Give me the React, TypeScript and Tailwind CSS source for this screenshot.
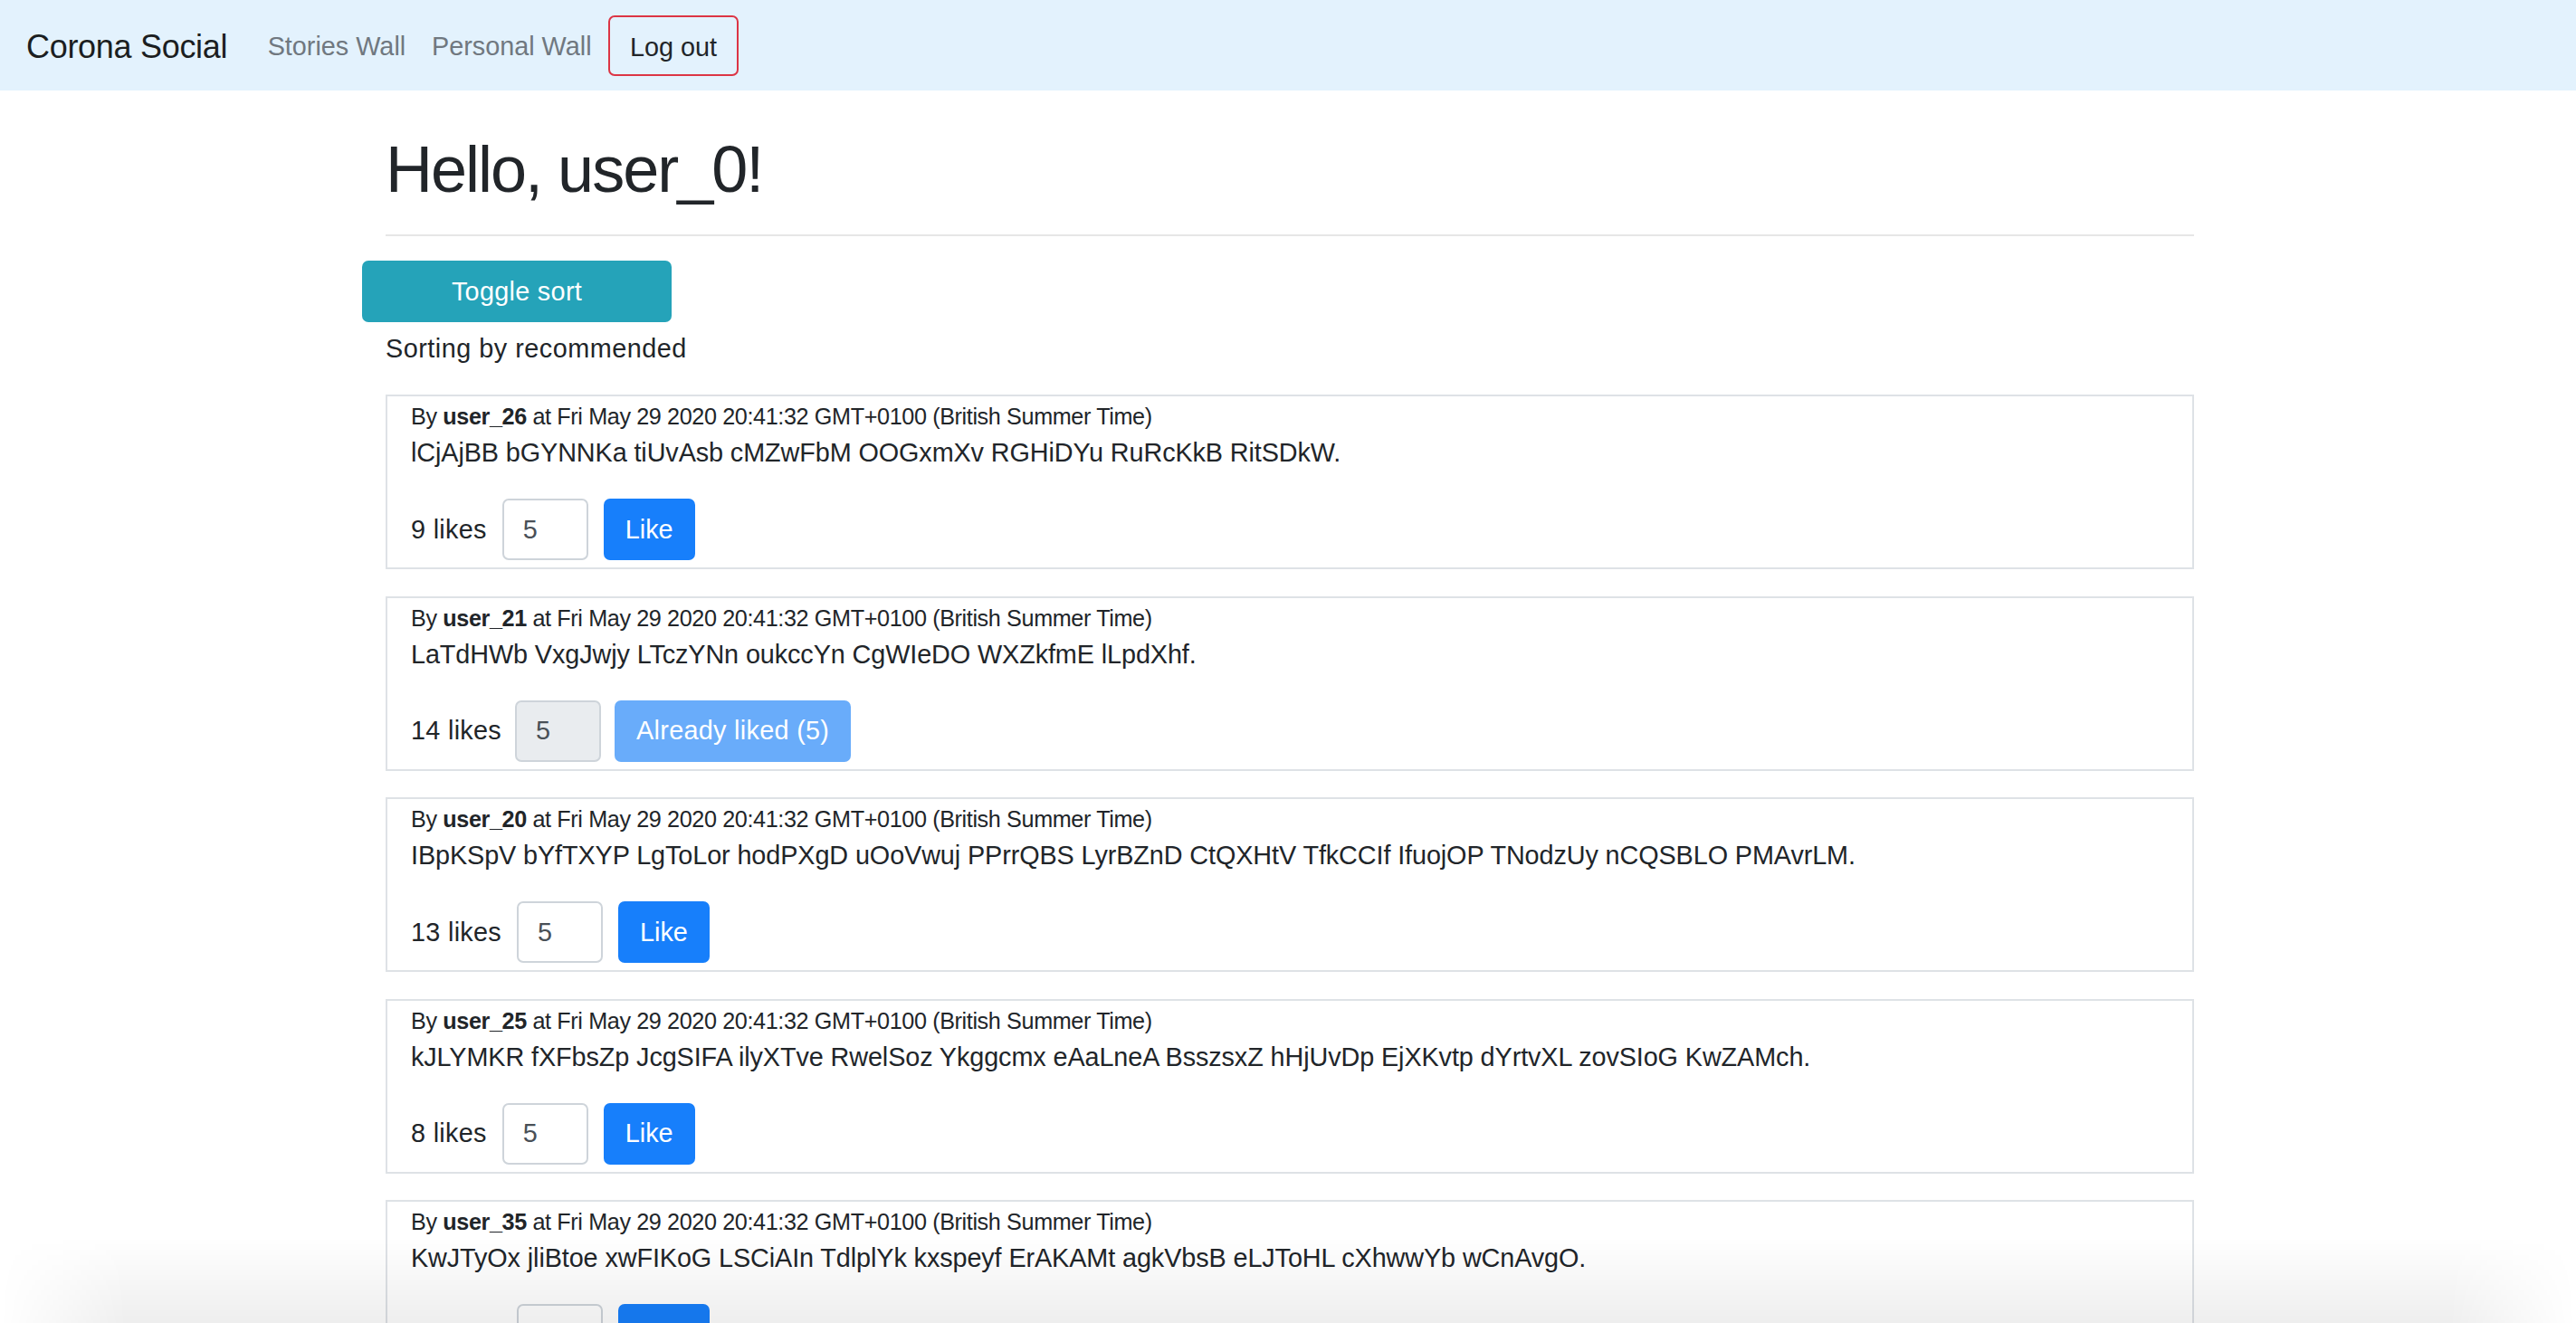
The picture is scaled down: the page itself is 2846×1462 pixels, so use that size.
import React from "react";

type Story = {
  user: string;
  text: string;
  likes: number;
  liked: boolean;
};

const stories: Story[] = [
  {
    user: "user_26",
    text: "lCjAjBB bGYNNKa tiUvAsb cMZwFbM OOGxmXv RGHiDYu RuRcKkB RitSDkW.",
    likes: 9,
    liked: false,
  },
  {
    user: "user_21",
    text: "LaTdHWb VxgJwjy LTczYNn oukccYn CgWIeDO WXZkfmE lLpdXhf.",
    likes: 14,
    liked: true,
  },
  {
    user: "user_20",
    text: "IBpKSpV bYfTXYP LgToLor hodPXgD uOoVwuj PPrrQBS LyrBZnD CtQXHtV TfkCCIf IfuojOP TNodzUy nCQSBLO PMAvrLM.",
    likes: 13,
    liked: false,
  },
  {
    user: "user_25",
    text: "kJLYMKR fXFbsZp JcgSIFA ilyXTve RwelSoz Ykggcmx eAaLneA BsszsxZ hHjUvDp EjXKvtp dYrtvXL zovSIoG KwZAMch.",
    likes: 8,
    liked: false,
  },
  {
    user: "user_35",
    text: "KwJTyOx jliBtoe xwFIKoG LSCiAIn TdlplYk kxspeyf ErAKAMt agkVbsB eLJToHL cXhwwYb wCnAvgO.",
    likes: 12,
    liked: false,
  },
];

function StoryCard({ s }: { s: Story }) {
  return (
    <div className="border-2 border-[#dee2e6] bg-white pl-[26px] pr-[25px] pt-[3px] pb-[8px]">
      <div className="text-[25.2px] leading-[38px] tracking-[-0.38px] text-[#212529]">
        By <b className="font-bold">{s.user}</b> at Fri May 29 2020 20:41:32 GMT+0100 (British Summer Time)
      </div>
      <p className="text-[28.8px] leading-[43.2px] mb-[28.8px] tracking-[-0.1px] text-[#212529]">{s.text}</p>
      <div className="flex items-center h-[68px]">
        <span className="text-[28.8px] leading-[43.2px] tracking-[0.3px] text-[#212529]">{s.likes} likes</span>
        {s.liked ? (
          <>
            <input
              readOnly
              disabled
              value="5"
              className="ml-[15px] w-[95px] h-[68px] border-2 border-[#ced4da] rounded-[7px] px-[21px] bg-[#e9ecef] text-[28.8px] text-[#495057] outline-none"
            />
            <button className="ml-[15px] h-[68px] px-[24px] rounded-[7px] bg-[#69acfa] text-white text-[28.8px] leading-[43.2px] tracking-[0.3px]">
              Already liked (5)
            </button>
          </>
        ) : (
          <>
            <input
              readOnly
              value="5"
              className="ml-[17px] w-[95px] h-[68px] border-2 border-[#ced4da] rounded-[7px] px-[21px] bg-white text-[28.8px] text-[#495057] outline-none"
            />
            <button className="ml-[17px] h-[68px] px-[24px] rounded-[7px] bg-[#177ffb] text-white text-[28.8px] leading-[43.2px]">
              Like
            </button>
          </>
        )}
      </div>
    </div>
  );
}

export default function App() {
  return (
    <div className="relative h-screen overflow-hidden bg-white font-['Liberation_Sans',Arial,sans-serif] text-[#212529]">
      <nav className="h-[100px] bg-[#e3f2fd] flex items-center pl-[29px]">
        <span className="text-[36px] leading-[54px] tracking-[-0.3px] text-[#1b1e21] mt-[3px] mr-[30px]">Corona Social</span>
        <a className="px-[14.4px] text-[28.8px] leading-[43.2px] text-[#707880] mt-[4px]">Stories Wall</a>
        <a className="px-[14.4px] text-[28.8px] leading-[43.2px] text-[#707880] mt-[4px]">Personal Wall</a>
        <button className="ml-[4px] h-[67px] px-[22px] pt-[5px] border-2 border-[#dc3545] rounded-[7px] text-[28.8px] leading-[43.2px] text-[#212529] flex items-center">
          Log out
        </button>
      </nav>

      <main className="w-[1998px] ml-[426px] pt-[44px]">
        <h1 className="text-[72px] leading-[86.4px] font-normal tracking-[-2px] text-[#212529]">Hello, user_0!</h1>
        <div className="mt-[29px] h-[2px] bg-[#e6e6e6]" />
        <button className="mt-[27px] -ml-[26px] w-[342px] h-[68px] rounded-[7px] bg-[#25a3b9] text-white text-[28.8px] leading-[43.2px] tracking-[0.3px] flex items-center justify-center">
          Toggle sort
        </button>
        <p className="mt-[8px] mb-[28.8px] text-[28.8px] leading-[43.2px] tracking-[0.5px]">Sorting by recommended</p>
        <div className="flex flex-col gap-[29.5px]">
          {stories.map((s) => (
            <StoryCard key={s.user} s={s} />
          ))}
        </div>
      </main>

      <div className="pointer-events-none absolute bottom-0 left-0 right-0 h-[95px] bg-[linear-gradient(to_bottom,rgba(0,0,0,0),rgba(0,0,0,0.065))] [mask-image:linear-gradient(to_right,transparent,black_140px,black_calc(100%-140px),transparent)]" />
    </div>
  );
}
